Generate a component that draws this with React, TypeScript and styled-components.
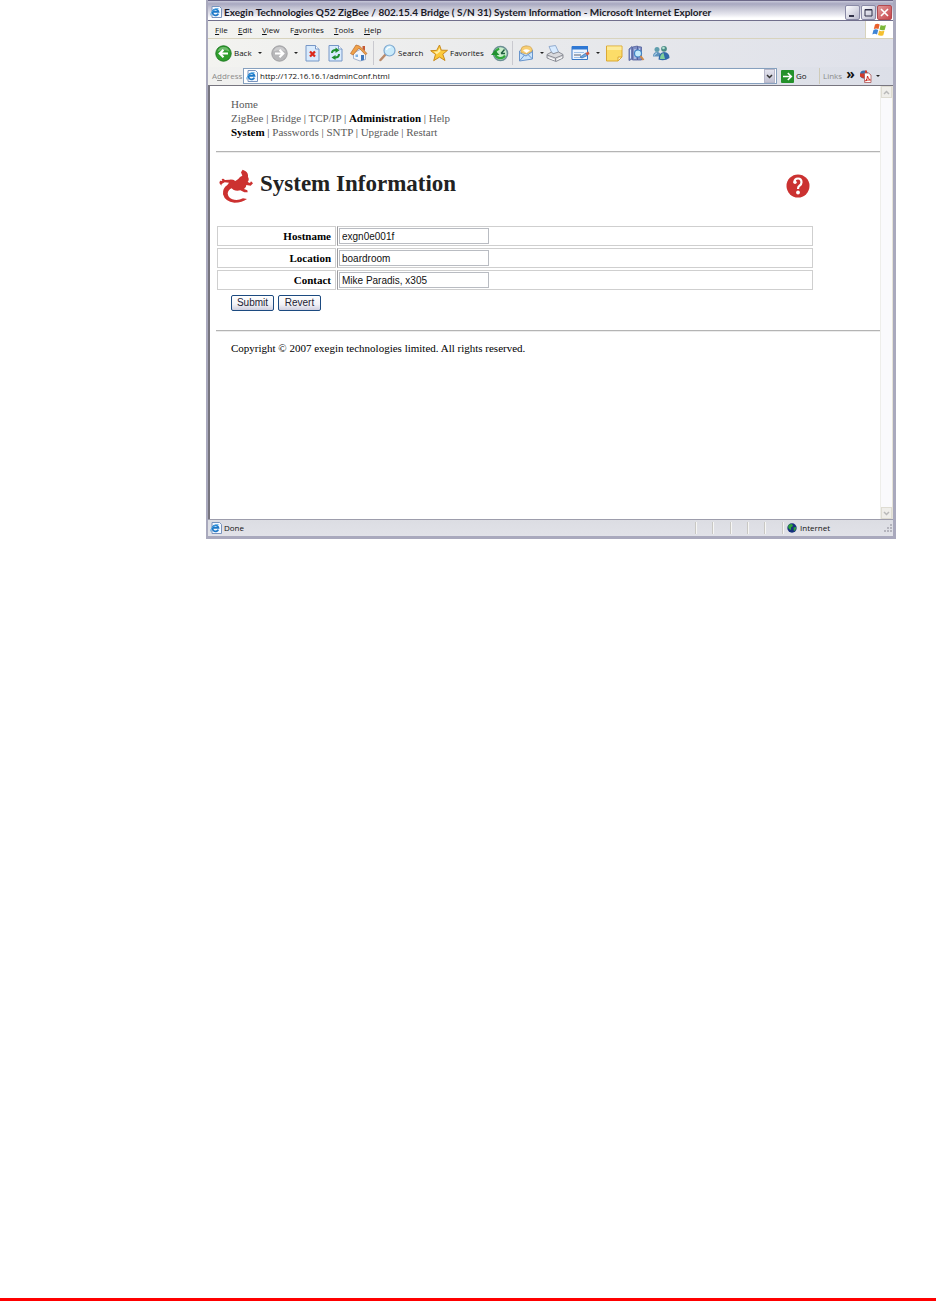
import React from "react";
import styled, { createGlobalStyle } from "styled-components";

const UI = `"Open Sans", "Noto Sans", sans-serif`;
const SERIF = `"Liberation Serif", "Times New Roman", serif`;
const SANS = `"Liberation Sans", Arial, sans-serif`;

const GlobalStyle = createGlobalStyle`
  *, *::before, *::after { box-sizing: border-box; }
  body { margin: 0; background: #fff; }
  button { font: inherit; color: inherit; margin: 0; padding: 0; border: 0; background: none; }
  svg { display: block; flex: none; }
`;

const Page = styled.div`
  min-height: 100vh;
  display: flex;
  flex-direction: column;
`;

const PageRule = styled.footer`
  margin-top: auto;
  margin-bottom: 4px;
  height: 3px;
  background: #f00;
`;

const Window = styled.main`
  margin: 0 40px 32px 206px;
  border: solid #a9a9bd;
  border-width: 0 3px 3px 2px;
  background: #fff;
  font: 8px/12px ${UI};
  color: #111;
`;

const TitleBar = styled.header`
  display: flex;
  align-items: center;
  height: 21px;
  padding: 3px 1px 0 2px;
  gap: 2px;
  border-top: 1px solid #6c6888;
  border-bottom: 1px solid #716f8c;
  background: linear-gradient(#c9c9da 0, #a8a8c0 15%, #c2c2d2 35%, #e6e6ee 70%, #fff 90%);
`;

const Title = styled.h1`
  margin: 0;
  flex: 1;
  font: 700 10px/14px Lato, ${UI};
  color: #1a1a26;
  white-space: nowrap;
`;

const Controls = styled.div`
  display: flex;
  gap: 1px;
`;

const Control = styled.button<{ $close?: boolean }>`
  width: 15px;
  height: 15px;
  display: grid;
  place-items: center;
  border: 1px solid ${p => (p.$close ? "#b14a50" : "#8a8aa6")};
  border-radius: 2px;
  background: ${p => (p.$close ? "linear-gradient(135deg,#e09a9a,#c8444a)" : "linear-gradient(135deg,#fdfdff,#b9b9cd)")};
`;

const MenuBar = styled.nav`
  display: flex;
  align-items: stretch;
  height: 18px;
  padding-left: 7px;
  background: linear-gradient(90deg, #f3f3f0, #e9eaec 45%, #dfe1ea);
  border-bottom: 1px solid #d8d3bd;
`;

const MenuItem = styled.button<{ $width: number }>`
  width: ${p => p.$width}px;
  text-align: left;
  white-space: nowrap;
`;

const Flag = styled.div`
  width: 28px;
  margin-left: auto;
  display: grid;
  place-items: center;
  background: #fff;
  border-left: 1px solid #d8d3bd;
`;

const Toolbar = styled.div`
  display: flex;
  align-items: center;
  height: 28px;
  padding-left: 7px;
  background: linear-gradient(90deg, #f3f3f0, #e9eaec 45%, #dfe1ea);
`;

const Tool = styled.button<{ $width: number }>`
  width: ${p => p.$width}px;
  display: flex;
  align-items: center;
  gap: 2px;
  white-space: nowrap;
`;

const GoTool = styled(Tool)`
  padding-left: 4px;
`;

const Divider = styled.i`
  width: 1px;
  height: 24px;
  margin: 0 5px 0 0;
  background: #c9c9cf;
`;

const Caret = styled.i`
  border: solid transparent;
  border-width: 2px 2px 0;
  border-top-color: #222;
  margin-left: 4px;
`;

const AddressBar = styled.form`
  display: flex;
  align-items: center;
  height: 19px;
  padding-left: 4px;
  background: linear-gradient(90deg, #f1f1ef, #e6e7eb 45%, #dcdfe8);
  border-bottom: 1px solid #77757f;
`;

const AddressLabel = styled.label`
  width: 31px;
  color: #8b8b8b;
`;

const AddressField = styled.div`
  flex: 1;
  min-width: 0;
  height: 16px;
  display: flex;
  align-items: center;
  gap: 2px;
  padding: 1px 1px 1px 2px;
  border: 1px solid #86a0be;
  background: #fff;
`;

const AddressInput = styled.input`
  flex: 1;
  min-width: 0;
  padding: 0;
  border: 0;
  outline: 0;
  font: 8px/12px ${UI};
  color: #111;
`;

const DropButton = styled.button`
  width: 11px;
  height: 14px;
  display: grid;
  place-items: center;
  background: linear-gradient(#e4e4ee, #c1c1d2);
  border: 1px solid #b7b7c9;
`;

const LinksBar = styled.div`
  display: flex;
  align-items: center;
  height: 16px;
  color: #8b8b8b;
  padding-left: 3px;
  gap: 4px;
  width: 74px;
  border-left: 1px solid #cfcbb8;

  ${Caret} {
    margin-left: 0;
  }
`;

const More = styled.b`
  font-size: 14px;
  line-height: 10px;
  color: #111;
  padding-bottom: 4px;
`;

const View = styled.div`
  display: flex;
  min-height: 433px;
  border-left: 2px solid #77757f;
`;

const Document = styled.section`
  flex: 1;
  min-width: 0;
  padding: 11px 0 0 6px;
  font-family: ${SERIF};
  font-size: 11px;
  line-height: 14px;
  color: #000;
`;

const Crumbs = styled.nav`
  padding-left: 15px;
  color: #444;
`;

const Crumb = styled.a<{ $current?: boolean }>`
  color: ${p => (p.$current ? "#000" : "#5a5a5a")};
  font-weight: ${p => (p.$current ? 700 : 400)};
  text-decoration: none;
`;

const Rule = styled.hr<{ $top: number }>`
  margin: ${p => p.$top}px 0 0;
  border: 0;
  border-top: 1px solid #b4b4b4;
  border-bottom: 1px solid #ececec;
`;

const Heading = styled.div`
  width: 90%;
  display: flex;
  align-items: center;
  gap: 7px;
  height: 36px;
  margin: 15px 0 20px;
  padding: 0 4px 0 3px;
`;

const HeadingText = styled.h2`
  flex: 1;
  margin: 0;
  padding-bottom: 4px;
  font-size: 23px;
  line-height: 26px;
  color: #222;
`;

const HelpLink = styled.a`
  display: block;
`;

const Fields = styled.table`
  width: 90%;
  border-spacing: 1px 2px;
`;

const FieldLabel = styled.th`
  width: 119px;
  height: 20px;
  padding: 0 4px;
  border: 1px solid #cfcfcf;
  text-align: right;
  font-size: 11px;
  line-height: 14px;
`;

const FieldCell = styled.td`
  height: 20px;
  padding: 1px;
  border: 1px solid #cfcfcf;
  border-left-color: #9a9a9e;
`;

const TextInput = styled.input`
  display: block;
  width: 150px;
  height: 16px;
  padding: 0 2px;
  border: 1px solid #b9bcc2;
  font: 10px/12px ${SANS};
  color: #111;
`;

const Actions = styled.div`
  display: flex;
  gap: 4px;
  padding: 3px 0 0 15px;
`;

const Action = styled.button`
  && {
    width: 43px;
    height: 16px;
    border: 1px solid #1c4a80;
    border-radius: 2px;
    background: linear-gradient(#fff, #f1f1f6 60%, #cfcfdf);
    font: 10px/12px ${SANS};
    color: #223;
  }
`;

const Copyright = styled.p`
  margin: 9px 0 0;
  padding-left: 15px;
`;

const ScrollTrack = styled.div`
  width: 13px;
  display: flex;
  flex-direction: column;
  justify-content: space-between;
  background: #fafafc;
  border-left: 1px solid #eeeeea;
  border-right: 1px solid #e5e3d8;
`;

const ScrollButton = styled.button`
  height: 12px;
  display: grid;
  place-items: center;
  background: #efeeea;
  border: 1px solid #dedcd2;
`;

const StatusBar = styled.footer`
  display: flex;
  align-items: center;
  height: 17px;
  padding-left: 2px;
  gap: 2px;
  border-top: 1px solid #9d9dac;
  background: linear-gradient(#dcdde3, #e1e2e8);
`;

const Status = styled.span`
  flex: 1;
`;

const Pane = styled.span<{ $width: number }>`
  width: ${p => p.$width}px;
  height: 12px;
  display: flex;
  align-items: center;
  gap: 3px;
  padding-left: 3px;
  border-left: 1px solid #f6f6f4;
  box-shadow: -1px 0 #c9c8c4;
`;

const Panes = styled.div`
  display: flex;
`;

const PageIcon = () => (
  <svg width="12" height="12" viewBox="0 0 12 12" aria-hidden="true">
    <path d="M2 .5h7.500l2 2v9H2z" fill="#f4f9ff" stroke="#7a94bd" />
    <path d="M8.300 7.600A3 3 0 1 1 8.500 5.800H3" fill="none" stroke="#1c78c8" strokeWidth="1.700" />
    <path d="M1 9.500C-.5 7 5 2 8.500 2.600" fill="none" stroke="#43a4e4" strokeWidth=".9" />
  </svg>
);

const NavIcon = ({ forward }: { forward?: boolean }) => (
  <svg width="17" height="17" viewBox="0 0 17 17" aria-hidden="true">
    <circle cx="8.500" cy="8.500" r="7.700" fill={forward ? "#b7b7b9" : "#2f9e2c"} stroke={forward ? "#9f9fa2" : "#1d7a22"} />
    <path d="M2.500 6.500a6.300 6.300 0 0 1 12 0q-6-3-12 0z" fill="#fff" opacity=".3" />
    <path d={forward ? "M4 8.500h8M8.500 4.800l3.800 3.700-3.800 3.700" : "M13 8.500H5M8.500 4.800 4.700 8.500l3.800 3.700"} fill="none" stroke="#fff" strokeWidth="2.100" />
  </svg>
);

const Sheet = ({ children }: { children: React.ReactNode }) => (
  <svg width="15" height="17" viewBox="0 0 15 17" aria-hidden="true">
    <path d="M1 .5h9.500l3.500 3.500v12H1z" fill="#d9ebfd" stroke="#7797c6" />
    <path d="M10.500.5V4H14" fill="#fff" stroke="#7797c6" />
    {children}
  </svg>
);

const HomeIcon = () => (
  <svg width="18" height="18" viewBox="0 0 18 18" aria-hidden="true">
    <path d="M12.500 2h2.500v5l-2.500-2z" fill="#c45a34" />
    <path d="M3.500 9 11 5l4.500 5v5.500L10 17l-6.500-2.500z" fill="#f3f6fb" stroke="#8ba0c2" strokeWidth=".8" />
    <path d="M.5 9.500 6 1l3.500 1L17 9.500l-1.500 1.300L9 4 3 11z" fill="#f0a249" stroke="#b7692d" strokeWidth=".7" />
    <path d="M11 11h3v5l-3 .7z" fill="#3f78bd" />
    <path d="M5.500 10.500h2.500v2.500H5.500z" fill="#7db1e4" />
  </svg>
);

const SearchIcon = () => (
  <svg width="17" height="18" viewBox="0 0 17 18" aria-hidden="true">
    <path d="M6.500 10.500 1.500 16" stroke="#b98a6a" strokeWidth="2.500" strokeLinecap="round" />
    <circle cx="10.500" cy="6.500" r="5.500" fill="#c9ebfb" stroke="#7da8d0" strokeWidth="1.200" />
    <path d="M7.500 6a3.400 3.400 0 0 1 4-2.800" stroke="#fff" strokeWidth="1.500" fill="none" />
  </svg>
);

const StarIcon = () => (
  <svg width="18" height="18" viewBox="0 0 18 18" aria-hidden="true">
    <path d="m9.500 1 1.800 5.200 6.200.1-4.700 3.900 2.200 6.300-5.500-3.400-5.800 3.600 1.800-6.300L.7 6.700l6-.3z" fill="#fcc93a" stroke="#c98a1c" />
    <path d="m9.500 4 1 3.300-3.700 3L4 7.700l3.500-.3z" fill="#fff0a8" />
  </svg>
);

const HistoryIcon = () => (
  <svg width="18" height="17" viewBox="0 0 18 17" aria-hidden="true">
    <circle cx="9.500" cy="8.500" r="7" fill="#c9eecb" stroke="#6b8f93" strokeWidth="1.600" />
    <path d="M10 8.500 13.500 4.500M10 8.500h4" stroke="#1f5f3f" strokeWidth="1.400" fill="none" />
    <path d="M14 10.500a5.300 5.300 0 0 1-9.800-1.500q0-4 4-5.300" stroke="#2fa83b" strokeWidth="2.200" fill="none" />
    <path d="M0 10 4 5l4.500 5z" fill="#219030" />
  </svg>
);

const MailIcon = () => (
  <svg width="16" height="17" viewBox="0 0 16 17" aria-hidden="true">
    <path d="M1.500 6 8 1l6.500 4v9L1.500 16z" fill="#c9e4fc" stroke="#6995cc" />
    <path d="M3 5q0-3.500 4-4 6-.5 7 3v2.500L8.500 9 3 7.500z" fill="#f8cf75" stroke="#d0a04a" strokeWidth=".7" />
    <path d="M5 5.500q3-2.500 7 0L8.500 8z" fill="#fff" />
    <path d="m1.500 7.500 6.500 3.500 6.500-4.500M1.500 16l5-6M14.500 14l-4.500-4.500" fill="none" stroke="#6995cc" />
  </svg>
);

const PrinterIcon = () => (
  <svg width="18" height="17" viewBox="0 0 18 17" aria-hidden="true">
    <path d="M3 1.500 9.500.5 13 8 6.500 9.500z" fill="#d8ebff" stroke="#7f9cc4" strokeWidth=".8" />
    <path d="m1 9.500 4.500-2.500 1.500 1.800L12.500 7l4.500 2.500v3.500L10 16.500 1 13z" fill="#d9dade" stroke="#83868f" strokeWidth=".9" />
    <path d="m1 10 8.500 3 7.500-3M9.500 13v3" fill="none" stroke="#83868f" strokeWidth=".9" />
    <path d="m2.500 12.500 6 2.300M11 14.500l5-2" stroke="#fff" fill="none" />
  </svg>
);

const EditIcon = () => (
  <svg width="19" height="16" viewBox="0 0 19 16" aria-hidden="true">
    <path d="M1 1.500h15.500v13H1z" fill="#eef5fe" stroke="#3879c8" />
    <path d="M1 1h16v3.500H1z" fill="#2f78d4" />
    <path d="M3 7.500h10M3 12.500h8" stroke="#9cc0e8" />
    <path d="M3 10h7" stroke="#555f70" />
    <path d="m9 12 6-4 1.500 2.500-5.500 2.500z" fill="#6aa9e6" stroke="#345f99" strokeWidth=".6" />
    <path d="m14.500 8 3-1.500 1 2.500-2.500 1.500z" fill="#d35d46" />
  </svg>
);

const NoteIcon = () => (
  <svg width="17" height="17" viewBox="0 0 17 17" aria-hidden="true">
    <path d="M.5 1h15.500v11l-4 4H.5z" fill="#fcdc68" stroke="#dba935" />
    <path d="M1 1.500h14.500V5H1z" fill="#fdeb9c" />
    <path d="M12 16v-4h4z" fill="#fff3bd" stroke="#dba935" />
  </svg>
);

const ResearchIcon = () => (
  <svg width="17" height="17" viewBox="0 0 17 17" aria-hidden="true">
    <path d="M1 4 4 1.500V14l-3 1.500zM4.500 2l5-1v14h-5zM9.500 1.500l4 .5v13h-4z" fill="#7f8fc6" stroke="#52609c" strokeWidth=".8" />
    <path d="M2.500 4.500v9M7 4v10M11.500 3.500V5" stroke="#dbe4fa" />
    <circle cx="10" cy="8.500" r="3.500" fill="#c3ebfb" stroke="#3f83c5" strokeWidth="1.200" />
    <path d="m12.500 11 3 4" stroke="#d08a4a" strokeWidth="2" />
  </svg>
);

const MessengerIcon = () => (
  <svg width="18" height="16" viewBox="0 0 18 16" aria-hidden="true">
    <circle cx="5" cy="4.500" r="2.500" fill="#5f9eae" />
    <path d="M1 11.500q0-4.500 4-4.500t4 4.500z" fill="#5f93bd" />
    <circle cx="12" cy="3.800" r="2.900" fill="#4b8c86" />
    <path d="M6.500 14.500q0-7 5.500-7.500 5.500.5 5.500 6-5 3.500-11 1.500z" fill="#3169a8" />
    <path d="M8 14q0-5 3.500-6l1.500 6z" fill="#7fcf9c" />
    <circle cx="11.500" cy="3" r="1.300" fill="#b5e2d2" />
    <path d="M2.500 10.500q.5-2 2.500-2.500" stroke="#bfe0f2" fill="none" />
  </svg>
);

const WindowsFlag = () => (
  <svg width="15" height="14" viewBox="0 0 15 14" aria-hidden="true">
    <path d="M3 1.500q2.200-1.500 4.700 0L6.500 6Q4.200 4.800 1.800 6z" fill="#e9602c" />
    <path d="M8.700 2q2.500 1.300 5.300 0l-1.200 4.700q-2.700 1.200-5.300-.2z" fill="#7db83a" />
    <path d="M1.500 7q2.300-1.300 4.700 0L5 11.500q-2.200-1.300-4.700 0z" fill="#3f85d6" />
    <path d="M7.200 7.600q2.500 1.200 5.300 0l-1.200 4.600q-2.700 1.300-5.300-.1z" fill="#f5c02e" />
  </svg>
);

const GoIcon = () => (
  <svg width="13" height="13" viewBox="0 0 13 13" aria-hidden="true">
    <rect width="13" height="13" rx="1" fill="#24912b" />
    <path d="M2 6.500h8M6.800 3l3.500 3.500L6.800 10" fill="none" stroke="#fff" strokeWidth="1.600" />
  </svg>
);

const PdfIcon = () => (
  <svg width="13" height="13" viewBox="0 0 13 13" aria-hidden="true">
    <circle cx="5" cy="4.500" r="4" fill="#3f6ea8" />
    <path d="M1 3.500h4v5L1 6.500zM6 .5l2 0v3H6z" fill="#d43a2a" />
    <path d="M5.500 3h4l2.500 2v7.500H5.500z" fill="#fff" stroke="#a55" strokeWidth=".8" />
    <path d="M6.500 11q2-2 2-5 .5 3 3 4-3-.5-5 1z" fill="none" stroke="#d02a20" />
  </svg>
);

const Globe = () => (
  <svg width="10" height="10" viewBox="0 0 10 10" aria-hidden="true">
    <circle cx="5" cy="5" r="4.700" fill="#16307e" />
    <path d="M2 1.500 5 1l1 2-2 1.500L4 7 2 6 1 4zM6.500 4.500 9 4v2L7 8.500z" fill="#2fa33b" />
  </svg>
);

const Chevron = ({ up, color = "#333" }: { up?: boolean; color?: string }) => (
  <svg width="7" height="5" viewBox="0 0 7 5" aria-hidden="true">
    <path d={up ? "M1 4l2.500-2.500L6 4" : "M1 1l2.500 2.500L6 1"} fill="none" stroke={color} strokeWidth="1.500" />
  </svg>
);

const Dragon = () => (
  <svg width="34" height="34" viewBox="0 0 102 102" aria-hidden="true">
    <path
      d="M1 42 3 35 10 36 8 30 13 29 18 33 32 32Q42 31 49 36Q58 32 63 24L70 20 66 10 71 2 80 7Q88 12 87 24Q92 32 86 39L93 42 96 37 102 43 95 50 82 48Q82 56 75 60L85 64 86 70 76 70 64 64Q52 67 43 62L38 58Q28 62 26 73Q27 86 40 91Q56 96 72 88L84 90Q70 101 46 101Q18 98 12 76Q10 58 25 48L30 41 17 40 8 45 7 50Z"
      fill="#cc3130"
    />
  </svg>
);

const HelpIcon = () => (
  <svg width="24" height="24" viewBox="0 0 24 24" aria-hidden="true">
    <circle cx="12" cy="12" r="11.500" fill="#cb3231" />
    <path d="M8.500 8Q8.500 4.500 12 4.500t3.500 3.700q0 2.300-2 3.500-1.500 1-1.500 3.300" fill="none" stroke="#fff" strokeWidth="2.200" />
    <circle cx="9" cy="8.300" r="1.700" fill="#fff" />
    <circle cx="12" cy="18.500" r="1.900" fill="#fff" />
  </svg>
);

const Grip = () => (
  <svg width="9" height="9" viewBox="0 0 9 9" aria-hidden="true">
    <path d="M6 0h2v2H6zM3 3h2v2H3zM6 3h2v2H6zM0 6h2v2H0zM3 6h2v2H3zM6 6h2v2H6z" fill="#b4b4bd" />
  </svg>
);

const menus: [string, string, string, number][] = [
  ["", "F", "ile", 23],
  ["", "E", "dit", 24],
  ["", "V", "iew", 28],
  ["F", "a", "vorites", 44],
  ["", "T", "ools", 30],
  ["", "H", "elp", 24],
];

const fields = [
  { id: "hostname", label: "Hostname", value: "exgn0e001f" },
  { id: "location", label: "Location", value: "boardroom" },
  { id: "contact", label: "Contact", value: "Mike Paradis, x305" },
];

export default function App() {
  return (
    <Page>
      <GlobalStyle />
      <Window>
        <TitleBar>
          <PageIcon />
          <Title>Exegin Technologies Q52 ZigBee / 802.15.4 Bridge ( S/N 31) System Information - Microsoft Internet Explorer</Title>
          <Controls>
            <Control aria-label="Minimize">
              <svg width="11" height="11" viewBox="0 0 11 11"><path d="M2 8h5v2H2z" fill="#33334a" /></svg>
            </Control>
            <Control aria-label="Maximize">
              <svg width="11" height="11" viewBox="0 0 11 11"><path d="M2 2.500h7V9H2zM2 3h7" fill="none" stroke="#33334a" /></svg>
            </Control>
            <Control $close aria-label="Close">
              <svg width="11" height="11" viewBox="0 0 11 11"><path d="m2 2 7 7M9 2 2 9" stroke="#fff" strokeWidth="1.600" /></svg>
            </Control>
          </Controls>
        </TitleBar>
        <MenuBar>
          {menus.map(([before, key, after, width]) => (
            <MenuItem key={before + key + after} $width={width}>{before}<u>{key}</u>{after}</MenuItem>
          ))}
          <Flag><WindowsFlag /></Flag>
        </MenuBar>
        <Toolbar>
          <Tool $width={56}><NavIcon />Back<Caret /></Tool>
          <Tool $width={34} aria-label="Forward"><NavIcon forward /><Caret /></Tool>
          <Tool $width={23} aria-label="Stop">
            <Sheet><path d="m5 6.500 5 5m0-5-5 5" stroke="#dc2a1c" strokeWidth="2.300" /></Sheet>
          </Tool>
          <Tool $width={22} aria-label="Refresh">
            <Sheet>
              <path d="M4 8q0-3 4-3M11 9q0 3.500-4 3.500" fill="none" stroke="#1f8f2f" strokeWidth="2" />
              <path d="m7.500 2.500 4 2.700L7.500 8zM7.500 10l-4 2.500 4 2.500z" fill="#1f8f2f" />
            </Sheet>
          </Tool>
          <Tool $width={23} aria-label="Home"><HomeIcon /></Tool>
          <Divider />
          <Tool $width={51}><SearchIcon />Search</Tool>
          <Tool $width={61}><StarIcon />Favorites</Tool>
          <Tool $width={21} aria-label="History"><HistoryIcon /></Tool>
          <Divider />
          <Tool $width={28} aria-label="Mail"><MailIcon /><Caret /></Tool>
          <Tool $width={25} aria-label="Print"><PrinterIcon /></Tool>
          <Tool $width={35} aria-label="Edit"><EditIcon /><Caret /></Tool>
          <Tool $width={22} aria-label="Discuss"><NoteIcon /></Tool>
          <Tool $width={24} aria-label="Research"><ResearchIcon /></Tool>
          <Tool $width={20} aria-label="Messenger"><MessengerIcon /></Tool>
        </Toolbar>
        <AddressBar onSubmit={e => e.preventDefault()}>
          <AddressLabel htmlFor="address">A<u>d</u>dress</AddressLabel>
          <AddressField>
            <PageIcon />
            <AddressInput id="address" defaultValue="http://172.16.16.1/adminConf.html" />
            <DropButton type="button" aria-label="Show history"><Chevron /></DropButton>
          </AddressField>
          <GoTool $width={42}><GoIcon />Go</GoTool>
          <LinksBar>
            Links<More>»</More><PdfIcon /><Caret />
          </LinksBar>
        </AddressBar>
        <View>
          <Document>
            <Crumbs>
              <div><Crumb href="#home">Home</Crumb></div>
              <div>
                <Crumb href="#zigbee">ZigBee</Crumb> | <Crumb href="#bridge">Bridge</Crumb> | <Crumb href="#tcpip">TCP/IP</Crumb> | <Crumb $current href="#administration">Administration</Crumb> | <Crumb href="#help">Help</Crumb>
              </div>
              <div>
                <Crumb $current href="#system">System</Crumb> | <Crumb href="#passwords">Passwords</Crumb> | <Crumb href="#sntp">SNTP</Crumb> | <Crumb href="#upgrade">Upgrade</Crumb> | <Crumb href="#restart">Restart</Crumb>
              </div>
            </Crumbs>
            <Rule $top={12} />
            <Heading>
              <Dragon />
              <HeadingText>System Information</HeadingText>
              <HelpLink href="#help" aria-label="Help"><HelpIcon /></HelpLink>
            </Heading>
            <form onSubmit={e => e.preventDefault()}>
              <Fields>
                <tbody>
                  {fields.map(f => (
                    <tr key={f.id}>
                      <FieldLabel scope="row"><label htmlFor={f.id}>{f.label}</label></FieldLabel>
                      <FieldCell><TextInput id={f.id} defaultValue={f.value} /></FieldCell>
                    </tr>
                  ))}
                </tbody>
              </Fields>
              <Actions>
                <Action type="submit">Submit</Action>
                <Action type="reset">Revert</Action>
              </Actions>
            </form>
            <Rule $top={19} />
            <Copyright>Copyright © 2007 exegin technologies limited. All rights reserved.</Copyright>
          </Document>
          <ScrollTrack>
            <ScrollButton aria-label="Scroll up"><Chevron up color="#b9b9b9" /></ScrollButton>
            <ScrollButton aria-label="Scroll down"><Chevron color="#b9b9b9" /></ScrollButton>
          </ScrollTrack>
        </View>
        <StatusBar>
          <PageIcon />
          <Status>Done</Status>
          <Panes>
            <Pane $width={17} /><Pane $width={18} /><Pane $width={17} /><Pane $width={17} /><Pane $width={18} />
            <Pane $width={99}><Globe />Internet</Pane>
          </Panes>
          <Grip />
        </StatusBar>
      </Window>
      <PageRule />
    </Page>
  );
}
